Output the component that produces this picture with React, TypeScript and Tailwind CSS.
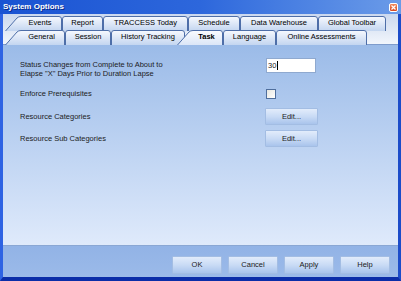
import React from "react";

interface TabProps {
  label: string;
  w: number;
  widthClass: string;
  slant?: boolean;
  active?: boolean;
  extra?: string;
}

function Tab({ label, w, widthClass, slant, active, extra = "" }: TabProps) {
  const h = 14;
  const s = slant ? 13 : 0;
  const d = slant
    ? `M0.5 ${h + 1} L${s - 1} 2 Q${s + 0.5} 0.5 ${s + 3} 0.5 L${w - 3} 0.5 Q${w - 0.5} 0.5 ${w - 0.5} 3 L${w - 0.5} ${h + 1}`
    : `M0.5 ${h + 1} L0.5 3 Q0.5 0.5 3 0.5 L${w - 3} 0.5 Q${w - 0.5} 0.5 ${w - 0.5} 3 L${w - 0.5} ${h + 1}`;
  return (
    <div className={`relative h-[14px] shrink-0 ${widthClass} ${extra}`}>
      <svg className="absolute left-0 top-0" width={w} height={h + 1}>
        <defs>
          <linearGradient id="tabN" x1="0" y1="0" x2="0" y2="1">
            <stop offset="0" stopColor="#f7f9fe" />
            <stop offset="1" stopColor="#c3d5f0" />
          </linearGradient>
          <linearGradient id="tabA" x1="0" y1="0" x2="0" y2="1">
            <stop offset="0" stopColor="#fbfcff" />
            <stop offset="1" stopColor="#dbe6f7" />
          </linearGradient>
        </defs>
        <path d={d} fill={active ? "url(#tabA)" : "url(#tabN)"} stroke="#4e6ea8" strokeWidth="1" />
      </svg>
      <span
        className={`absolute inset-0 flex items-center justify-center text-[7.5px] leading-none text-black ${
          slant ? "pl-[13px]" : ""
        } ${active ? "font-bold" : ""}`}
      >
        {label}
      </span>
    </div>
  );
}

function BlueButton({ label, className = "" }: { label: string; className?: string }) {
  return (
    <div
      className={`flex items-center justify-center bg-gradient-to-b from-[#e2ecfb] via-[#c9dbf5] to-[#a9c4ec] border border-[#a3bde3] rounded-[1px] text-[7.5px] text-[#1b1b1b] ${className}`}
    >
      {label}
    </div>
  );
}

export default function App() {
  return (
    <div
      className="w-[401px] h-[281px] flex flex-col bg-[#1d4fd1] overflow-hidden"
      style={{ fontFamily: '"Liberation Sans", Arial, sans-serif' }}
    >
      {/* Title bar */}
      <div className="h-[14px] shrink-0 flex items-center justify-between pl-[3px] pr-[3px] bg-gradient-to-r from-[#1a53d2] via-[#2d67dc] to-[#6b9be8]">
        <span className="text-[8px] font-bold text-white leading-none [text-shadow:1px_1px_0_#0a2a8a]">
          System Options
        </span>
        <div className="w-[9px] h-[9px] rounded-[2px] border border-white bg-gradient-to-b from-[#f08a5c] to-[#d7451c] flex items-center justify-center">
          <svg width="5" height="5" viewBox="0 0 5 5">
            <path d="M0.5 0.5 L4.5 4.5 M4.5 0.5 L0.5 4.5" stroke="white" strokeWidth="1.2" />
          </svg>
        </div>
      </div>

      {/* Body with frame */}
      <div className="flex-1 flex flex-col border-l-[3px] border-r-[3px] border-b-[4px] border-l-[#2e63e3] border-r-[#1c4cc9] border-b-[#0b2da8]">
        {/* Tab strip */}
        <div className="h-[31px] shrink-0 pt-[2px] bg-gradient-to-b from-[#cbd8ee] to-[#f2f6fc] border-b border-[#7f9ccc]">
          <div className="flex ml-[2px]">
            <Tab label="Events" w={57} widthClass="w-[57px]" slant />
            <Tab label="Report" w={41} widthClass="w-[41px]" />
            <Tab label="TRACCESS Today" w={85} widthClass="w-[85px]" />
            <Tab label="Schedule" w={52} widthClass="w-[52px]" />
            <Tab label="Data Warehouse" w={78} widthClass="w-[78px]" />
            <Tab label="Global Toolbar" w={68} widthClass="w-[68px]" />
          </div>
          <div className="flex ml-[2px]">
            <Tab label="General" w={60} widthClass="w-[60px]" slant />
            <Tab label="Session" w={46} widthClass="w-[46px]" />
            <Tab label="History Tracking" w={74} widthClass="w-[74px]" />
            <Tab label="Task" w={46} widthClass="w-[46px]" slant active extra="-ml-[8px] z-10" />
            <Tab label="Language" w={53} widthClass="w-[53px]" />
            <Tab label="Online Assessments" w={91} widthClass="w-[91px]" />
          </div>
        </div>

        {/* Panel */}
        <div className="flex-1 flex flex-col pt-[13px] pl-[17px] bg-gradient-to-b from-[#9bbbe8] to-[#dfeafb] text-[7.5px] text-[#1c1c1c]">
          <div className="flex items-start">
            <div className="w-[246px] mt-[2px] leading-[9px]">
              Status Changes from Complete to About to
              <br />
              Elapse "X" Days Prior to Duration Lapse
            </div>
            <div className="w-[50px] h-[15px] bg-white border border-[#8fa9cf] flex items-center pl-[1px] leading-none">
              30<span className="inline-block w-px h-[9px] bg-black ml-px" />
            </div>
          </div>
          <div className="flex items-center h-[10px] mt-[11px]">
            <div className="w-[246px]">Enforce Prerequisites</div>
            <div className="w-[10px] h-[10px] bg-gradient-to-br from-[#e6e6e0] to-white border border-[#4f6e9c]" />
          </div>
          <div className="flex items-center h-[17px] mt-[9px]">
            <div className="w-[245px]">Resource Categories</div>
            <BlueButton label="Edit..." className="w-[53px] h-[17px]" />
          </div>
          <div className="flex items-center h-[17px] mt-[5px]">
            <div className="w-[245px]">Resource Sub Categories</div>
            <BlueButton label="Edit..." className="w-[53px] h-[17px]" />
          </div>
        </div>

        {/* Footer */}
        <div className="h-[32px] shrink-0 flex justify-end gap-[6px] pr-[8px] pt-[10px] bg-gradient-to-b from-[#92b3e6] to-[#9bbae9] border-t border-[#8aa7d4]">
          <BlueButton label="OK" className="w-[50px] h-[18px]" />
          <BlueButton label="Cancel" className="w-[50px] h-[18px]" />
          <BlueButton label="Apply" className="w-[50px] h-[18px]" />
          <BlueButton label="Help" className="w-[50px] h-[18px]" />
        </div>
      </div>
    </div>
  );
}
